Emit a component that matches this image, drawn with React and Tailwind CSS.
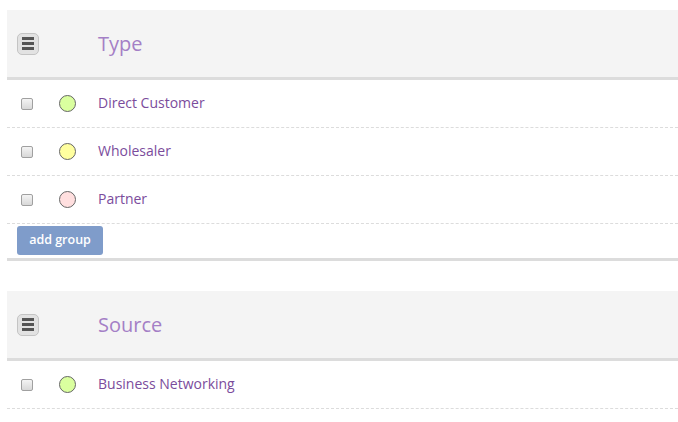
import React from "react";

function MenuBtn() {
  return (
    <div className="w-[22px] h-[22px] rounded-[5px] border border-[#c4c4c4] bg-[#e2e2e2] flex flex-col items-center justify-center gap-[2px]">
      <div className="w-[12px] h-[3px] bg-[#555]" />
      <div className="w-[12px] h-[3px] bg-[#555]" />
      <div className="w-[12px] h-[3px] bg-[#555]" />
    </div>
  );
}

function Check() {
  return (
    <div className="w-[12px] h-[12px] rounded-[2px] border border-[#a0a0a0] bg-gradient-to-b from-[#f4f4f4] to-[#d8d8d8]" />
  );
}

function Row({ color, label }) {
  return (
    <div className="flex items-center h-[48px] border-b border-dashed border-[#dcdcdc]">
      <div className="w-[14px]" />
      <Check />
      <div className="w-[26px]" />
      <div className={"w-[17px] h-[17px] rounded-full border border-[#666] " + color} />
      <div className="w-[22px]" />
      <span className="text-[14px] text-[#7b4c9c] pb-[2px]">{label}</span>
    </div>
  );
}

function Header({ title }) {
  return (
    <div className="flex items-center h-[70px] bg-[#f4f4f4] border-b-[3px] border-[#dcdcdc]">
      <div className="w-[10px]" />
      <MenuBtn />
      <div className="w-[59px]" />
      <span className="text-[20px] text-[#a47fc6]">{title}</span>
    </div>
  );
}

export default function App() {
  return (
    <div
      className="w-[678px] h-[422px] bg-white overflow-hidden pt-[10px] pl-[7px]"
      style={{ fontFamily: '"Open Sans", sans-serif' }}
    >
      <Header title="Type" />
      <Row color="bg-[#daff9f]" label="Direct Customer" />
      <Row color="bg-[#ffff9f]" label="Wholesaler" />
      <Row color="bg-[#ffdfdf]" label="Partner" />
      <div className="h-[37px] pt-[2px] pl-[10px] border-b-[3px] border-[#dcdcdc]">
        <button className="w-[86px] h-[29px] rounded-[3px] bg-[#7f9cca] text-white text-[12.5px] font-semibold leading-none pb-[1px]">
          add group
        </button>
      </div>
      <div className="h-[30px]" />
      <Header title="Source" />
      <Row color="bg-[#daff9f]" label="Business Networking" />
    </div>
  );
}
